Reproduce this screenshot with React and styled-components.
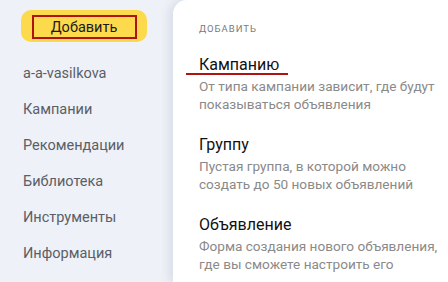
import React from 'react';
import styled, { createGlobalStyle } from 'styled-components';

const GlobalStyle = createGlobalStyle`
  html, body {
    margin: 0;
    padding: 0;
    width: 448px;
    height: 282px;
    overflow: hidden;
    background: #eef1f7;
  }
  * { box-sizing: border-box; }
`;

const Page = styled.div`
  width: 448px;
  height: 282px;
  display: flex;
  font-family: Roboto, 'Open Sans', Arial, sans-serif;
  background: #eef1f7;
`;

const Sidebar = styled.div`
  width: 173px;
  flex-shrink: 0;
  padding: 10px 0 0 21px;
  display: flex;
  flex-direction: column;
`;

const AddButton = styled.div`
  width: 126px;
  height: 32px;
  border-radius: 10px;
  background: #fdd94c;
  display: flex;
  align-items: center;
  justify-content: center;
  margin-bottom: 13px;
`;

const Highlight = styled.div`
  width: 105px;
  height: 24px;
  margin-top: 2px;
  border: 2px solid #b0120f;
  display: flex;
  align-items: center;
  justify-content: center;
  font-size: 14.5px;
  color: #1a1a1a;
`;

const NavItem = styled.div`
  height: 36px;
  display: flex;
  align-items: center;
  padding-left: 2px;
  font-size: 14.5px;
  color: #5b5e66;
`;

const Panel = styled.div`
  flex: 1;
  background: #fff;
  border-top-left-radius: 14px;
  box-shadow: -4px 0 10px rgba(60, 80, 130, 0.12);
  padding: 22px 0 0 26px;
  display: flex;
  flex-direction: column;
`;

const Caption = styled.div`
  font-size: 9.5px;
  line-height: 13px;
  letter-spacing: 1px;
  color: #7a7a7a;
  margin-bottom: 20px;
`;

const Option = styled.div`
  display: flex;
  flex-direction: column;
  margin-bottom: 22px;
`;

const OptionTitle = styled.div`
  position: relative;
  font-size: 16px;
  color: #111;
  line-height: 20px;
  margin-bottom: 2px;
  ${({ $marked }) => $marked && `
    &::after {
      content: '';
      position: absolute;
      left: -13px;
      top: 18px;
      width: 102px;
      height: 2px;
      background: #b0120f;
    }
  `}
`;

const OptionText = styled.div`
  font-size: 13.6px;
  line-height: 18px;
  color: #8a8a8a;
`;

const navItems = ['a-a-vasilkova', 'Кампании', 'Рекомендации', 'Библиотека', 'Инструменты', 'Информация'];

const options = [
  { title: 'Кампанию', text: ['От типа кампании зависит, где будут', 'показываться объявления'], marked: true },
  { title: 'Группу', text: ['Пустая группа, в которой можно', 'создать до 50 новых объявлений'] },
  { title: 'Объявление', text: ['Форма создания нового объявления,', 'где вы сможете настроить его'] },
];

const App = () => (
  <Page>
    <GlobalStyle />
    <Sidebar>
      <AddButton>
        <Highlight>Добавить</Highlight>
      </AddButton>
      {navItems.map(item => <NavItem key={item}>{item}</NavItem>)}
    </Sidebar>
    <Panel>
      <Caption>ДОБАВИТЬ</Caption>
      {options.map(o => (
        <Option key={o.title}>
          <OptionTitle $marked={o.marked}>{o.title}</OptionTitle>
          {o.text.map(line => <OptionText key={line}>{line}</OptionText>)}
        </Option>
      ))}
    </Panel>
  </Page>
);

export default App;
